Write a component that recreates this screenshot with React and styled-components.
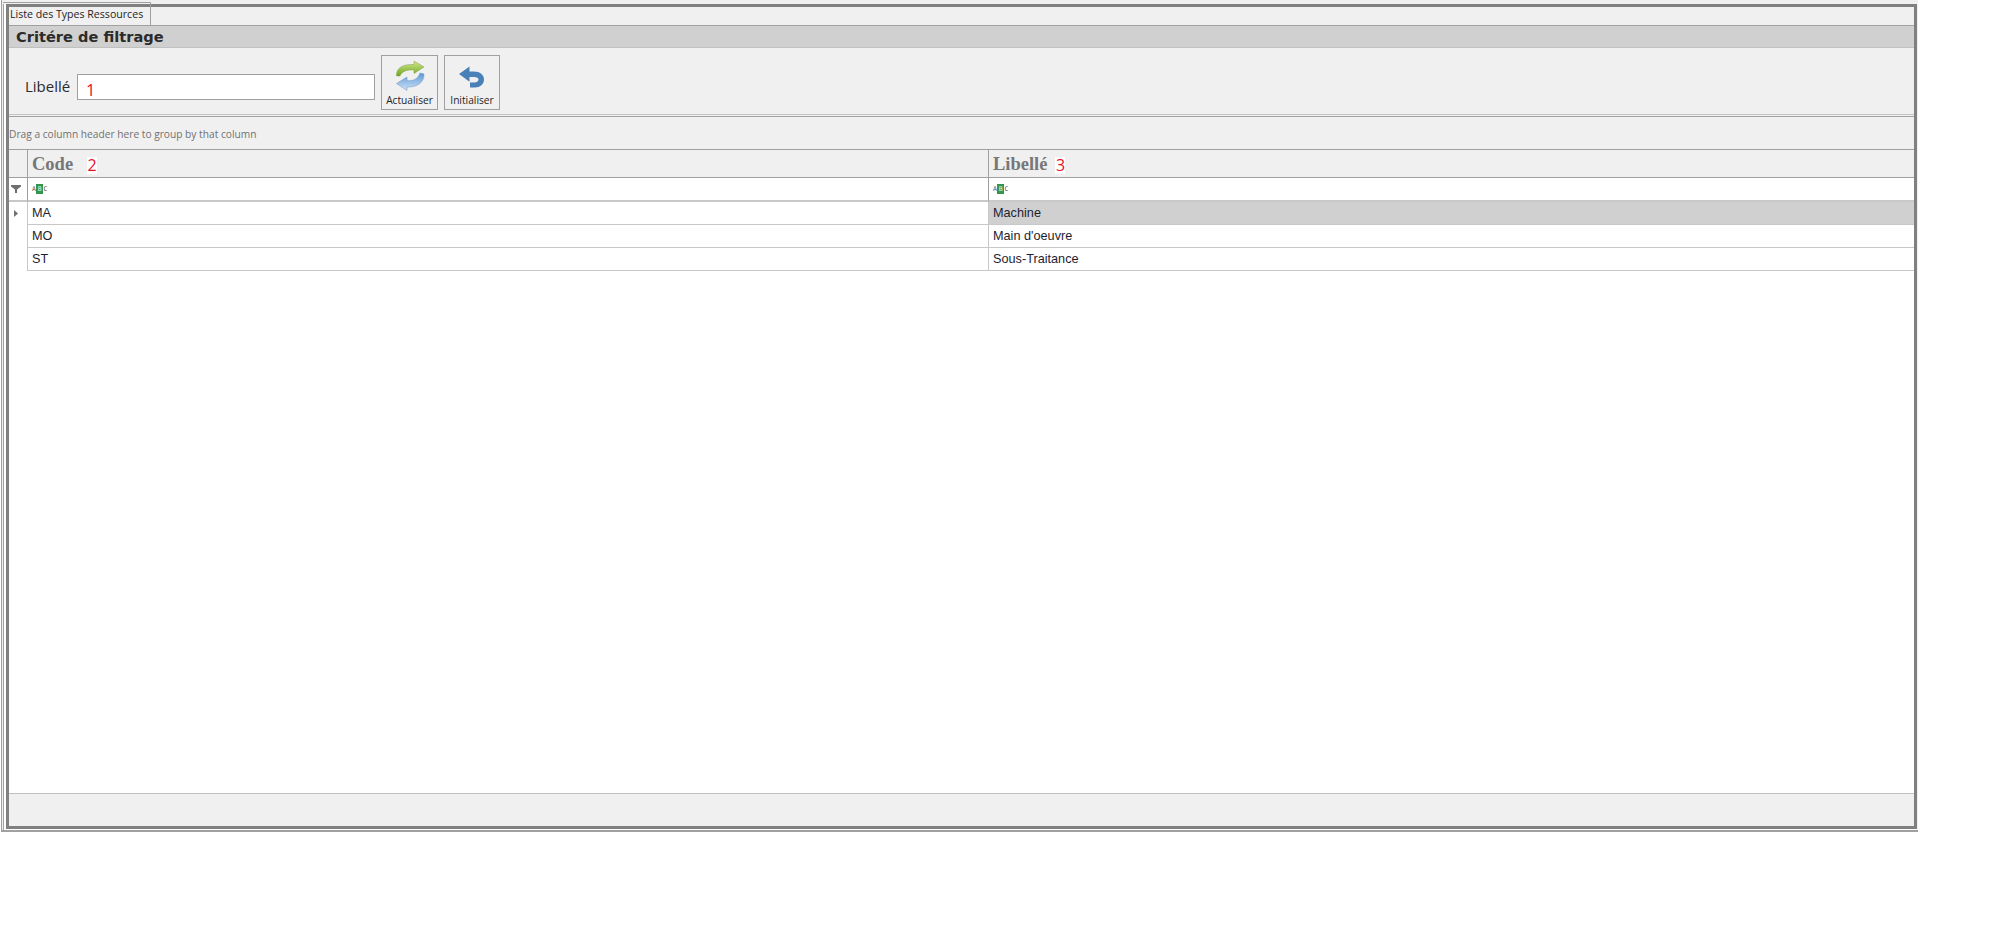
import { Fragment } from "react";
import styled, { createGlobalStyle } from "styled-components";

const GlobalStyle = createGlobalStyle`
  html, body {
    margin: 0;
    background: #fff;
  }
  body {
    font-family: "Liberation Sans", Arial, sans-serif;
  }
`;

const Page = styled.div`
  width: 2016px;
  height: 928px;
  overflow: hidden;
  padding-left: 1px;
  box-sizing: border-box;
`;

const OuterFrame = styled.div`
  position: relative;
  width: 1917px;
  height: 832px;
  box-sizing: border-box;
  background: #f0f0f0;
  border-left: 1px solid #a0a0a0;
  border-bottom: 2px solid #a0a0a0;
  padding: 4px 1px 0 1px;
`;

const SideRail = styled.div`
  height: 100%;
  box-sizing: border-box;
  background: #fff;
  border-left: 1px solid #a0a0a0;
  padding: 0 0 1px 2px;
`;

const InnerFrame = styled.div`
  position: relative;
  z-index: 1;
  height: 100%;
  box-sizing: border-box;
  border: 3px solid #808080;
  display: flex;
  flex-direction: column;
  background: #f0f0f0;
`;

const Tab = styled.div`
  position: relative;
  height: 19px;
  flex: none;
  box-sizing: border-box;
  border-bottom: 1px solid #a0a0a0;
  padding: 0 0 0 1px;
  font-family: "Open Sans", sans-serif;
  font-size: 10.6px;
  line-height: 15px;
  color: #1e1e1e;
  white-space: nowrap;
`;

const TabEdge = styled.span`
  position: absolute;
  top: -5px;
  left: 141px;
  width: 1px;
  height: 23px;
  background: #a0a0a0;
`;

const TabTop = styled.div`
  position: absolute;
  top: 2px;
  left: 1px;
  width: 148px;
  height: 2px;
  box-sizing: border-box;
  border-top: 1px solid #a0a0a0;
`;

const SectionTitle = styled.div`
  height: 21px;
  flex: none;
  background: #d0d0d0;
  border-bottom: 1px solid #c0c0c0;
  padding-left: 7px;
  font-family: "DejaVu Sans", sans-serif;
  font-size: 14.6px;
  font-weight: bold;
  line-height: 21px;
  color: #2b2b2b;
`;

const FilterBar = styled.div`
  height: 67px;
  flex: none;
  box-sizing: border-box;
  display: flex;
  align-items: flex-start;
  border-bottom: 1px solid #c4c4c4;
  margin-bottom: 1px;
  padding: 7px 0 0 16px;
`;

const FieldLabel = styled.label`
  width: 46px;
  font-family: "Open Sans", sans-serif;
  font-size: 15px;
  line-height: 20px;
  margin: 21px 6px 0 0;
  color: #2b2b2b;
  white-space: nowrap;
`;

const FieldBox = styled.div`
  width: 298px;
  height: 26px;
  box-sizing: border-box;
  margin: 19px 6px 0 0;
  background: #fff;
  border: 1px solid #a0a0a0;
  padding: 4px 0 0 8px;
`;

const Marker = styled.span`
  display: inline-block;
  font-family: "Open Sans", sans-serif;
  font-size: 16.5px;
  line-height: 22px;
  color: #e8102a;
`;

const ToolButton = styled.div`
  width: ${(props) => props.$width}px;
  height: 55px;
  box-sizing: border-box;
  margin-right: 6px;
  background: #f0f0f0;
  border: 1px solid #a0a0a0;
  display: flex;
  flex-direction: column;
  align-items: center;
  padding-top: 5px;
  font-family: "Open Sans", sans-serif;
  font-size: 10.2px;
  line-height: 15px;
  color: #1e1e1e;

  svg {
    display: block;
    margin-bottom: 2px;
  }
`;

const GroupPanel = styled.div`
  height: 33px;
  flex: none;
  box-sizing: border-box;
  border-top: 1px solid #a0a0a0;
  padding-top: 10px;
  font-family: "Open Sans", sans-serif;
  font-size: 10.2px;
  line-height: 15px;
  color: #707070;
  white-space: nowrap;
`;

const Grid = styled.div`
  flex: 1;
  min-height: 0;
  background: #fff;
  display: grid;
  grid-template-columns: 18px 961px 1fr;
  grid-auto-rows: min-content;
  border-top: 1px solid #a0a0a0;
`;

const HeaderCell = styled.div`
  height: 28px;
  box-sizing: border-box;
  background: #f0f0f0;
  border-bottom: 1px solid #a0a0a0;
  border-left: ${(props) => (props.$first ? "none" : "1px solid #a0a0a0")};
  padding-left: 4px;
  font-family: "Liberation Serif", serif;
  font-size: 18.5px;
  font-weight: bold;
  line-height: 28px;
  color: #777;
`;

const HeaderMarker = styled(Marker)`
  width: 10px;
  height: 17px;
  margin-left: ${(props) => props.$gap}px;
  background: #fff;
  font-weight: normal;
  font-size: 16px;
  line-height: 17px;
  text-align: center;
  vertical-align: -1px;
`;

const FilterCell = styled.div`
  height: 24px;
  box-sizing: border-box;
  background: #fff;
  border-bottom: 2px solid #c8c8c8;
  border-left: ${(props) => (props.$first ? "none" : "1px solid #a0a0a0")};
  padding-left: ${(props) => (props.$first ? "2px" : "4px")};
  display: flex;
  align-items: center;
`;

const IndicatorCell = styled.div`
  height: 23px;
  background: #fff;
  padding-left: 5px;
  display: flex;
  align-items: center;
`;

const DataCell = styled.div`
  height: 23px;
  box-sizing: border-box;
  background: ${(props) => (props.$selected ? "#d0d0d0" : "#fff")};
  border-left: 1px solid #c8c8c8;
  border-bottom: 1px solid #c8c8c8;
  padding-left: 4px;
  font-size: 12.7px;
  line-height: 22px;
  color: #1e1e30;
`;

const AbcChip = styled.span`
  display: inline-flex;
  align-items: center;
  height: 10px;
  font-family: "DejaVu Sans Mono", monospace;
  font-size: 6.5px;
  line-height: 10px;
  color: #555;
`;

const AbcMiddle = styled.span`
  background: #34964e;
  color: #e8f5ea;
  width: 7px;
  height: 10px;
  margin: 0 0.3px;
  text-align: center;
`;

const Footer = styled.div`
  height: 33px;
  flex: none;
  box-sizing: border-box;
  background: #f0f0f0;
  border-top: 1px solid #c0c0c0;
`;

const RefreshIcon = () => (
  <svg width="30" height="30" viewBox="0 0 30 30">
    <defs>
      <linearGradient id="greenArrow" x1="0" y1="0" x2="0" y2="1">
        <stop offset="0" stopColor="#d3e88a" />
        <stop offset="1" stopColor="#6fa81e" />
      </linearGradient>
      <linearGradient id="blueArrow" x1="0" y1="0" x2="0" y2="1">
        <stop offset="0" stopColor="#5b97d6" />
        <stop offset="1" stopColor="#cfe3f7" />
      </linearGradient>
    </defs>
    <path
      d="M1.5 15 C1 6 9 3 19 3.5 L19 0 L29 6 L19 12.5 L19 9 C12 8.5 7 10 5 15 Z"
      fill="url(#greenArrow)"
      stroke="#7f9f55"
      strokeWidth="0.5"
    />
    <path
      d="M29 13 C29.5 22 21 26.5 12 26 L12 29.5 L1.5 22.5 L12 16 L12 19.5 C18 20.5 23 18 25 12 Z"
      fill="url(#blueArrow)"
      stroke="#6d93c0"
      strokeWidth="0.5"
    />
  </svg>
);

const UndoIcon = () => (
  <svg width="30" height="30" viewBox="0 0 30 30">
    <path
      d="M2 13 L12.5 5.5 L12.5 10.5 L17 10.5 C23 10.5 27 14 27 18.5 C27 23 23 26.5 18 26.5 L13 26.5 L13 21.5 L17.5 21.5 C20 21.5 21.5 20 21.5 18.5 C21.5 17 20 16 17 16 L12.5 16 L12.5 20.7 Z"
      fill="#4a80b8"
    />
  </svg>
);

const FunnelIcon = () => (
  <svg width="10" height="8" viewBox="0 0 10 8">
    <path d="M0 0 H10 V1.5 L6 4.5 V8 H4 V4.5 L0 1.5 Z" fill="#6e6e6e" />
  </svg>
);

const RowArrow = () => (
  <svg width="4" height="7" viewBox="0 0 4 7">
    <path d="M0 0 L4 3.5 L0 7 Z" fill="#707070" />
  </svg>
);

const AbcIcon = () => (
  <AbcChip>
    A<AbcMiddle>B</AbcMiddle>C
  </AbcChip>
);

const rows = [
  { code: "MA", label: "Machine", current: true },
  { code: "MO", label: "Main d'oeuvre" },
  { code: "ST", label: "Sous-Traitance" },
];

export default function App() {
  return (
    <>
      <GlobalStyle />
      <Page>
        <OuterFrame>
          <TabTop />
          <SideRail>
            <InnerFrame>
              <Tab>
                Liste des Types Ressources
                <TabEdge />
              </Tab>
              <SectionTitle>Critére de filtrage</SectionTitle>
              <FilterBar>
                <FieldLabel>Libellé</FieldLabel>
                <FieldBox>
                  <Marker>1</Marker>
                </FieldBox>
                <ToolButton $width={57}>
                  <RefreshIcon />
                  Actualiser
                </ToolButton>
                <ToolButton $width={56}>
                  <UndoIcon />
                  Initialiser
                </ToolButton>
              </FilterBar>
              <GroupPanel>Drag a column header here to group by that column</GroupPanel>
              <Grid>
                <HeaderCell $first />
                <HeaderCell>
                  Code<HeaderMarker $gap={14}>2</HeaderMarker>
                </HeaderCell>
                <HeaderCell>
                  Libellé<HeaderMarker $gap={8}>3</HeaderMarker>
                </HeaderCell>
                <FilterCell $first>
                  <FunnelIcon />
                </FilterCell>
                <FilterCell>
                  <AbcIcon />
                </FilterCell>
                <FilterCell>
                  <AbcIcon />
                </FilterCell>
                {rows.map((row) => (
                  <Fragment key={row.code}>
                    <IndicatorCell>{row.current && <RowArrow />}</IndicatorCell>
                    <DataCell>{row.code}</DataCell>
                    <DataCell $selected={row.current}>{row.label}</DataCell>
                  </Fragment>
                ))}
              </Grid>
              <Footer />
            </InnerFrame>
          </SideRail>
        </OuterFrame>
      </Page>
    </>
  );
}
